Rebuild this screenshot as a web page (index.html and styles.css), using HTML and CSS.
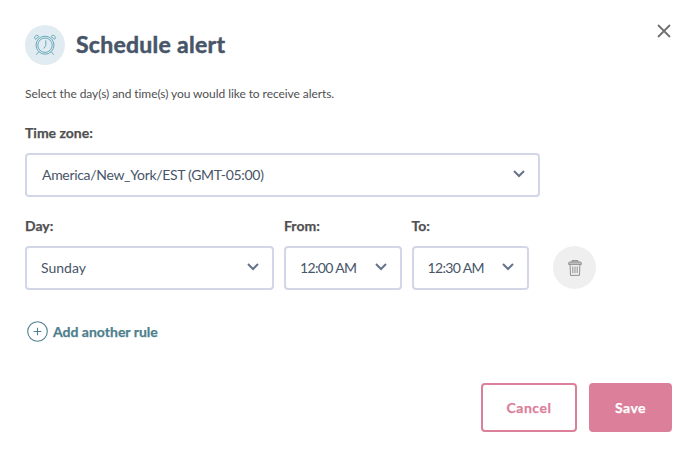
FILE: index.html
```
<!DOCTYPE html>
<html lang="en">
<head>
	<meta charset="utf-8">
	<meta name="viewport" content="width=device-width, initial-scale=1">
	<title>Schedule alert</title>
	<link rel="stylesheet" href="styles.css">
</head>
<body>
<div class="modal">
	<div class="header">
		<span class="clock">
			<svg width="22" height="22" viewBox="0 0 22 22">
				<circle cx="11" cy="11.2" r="9"/>
				<circle cx="11" cy="11.2" r="7.2"/>
				<path d="M11.8 6.4v5l-2 3.2M4.8 17.7l-2.5 3M17.2 17.7l2.5 3"/>
				<path d="M1.3 5.3C-.2 3.5 1.1 1.2 3 1.3c1 0 1.6.6 2 1.3zM20.7 5.3c1.5-1.8.2-4.1-1.7-4-1 0-1.6.6-2 1.3z"/>
			</svg>
		</span>
		<h1>Schedule alert</h1>
		<button class="close" type="button" aria-label="Close">
			<svg width="14" height="14" viewBox="0 0 14 14"><path d="M1 1l12 12M13 1L1 13"/></svg>
		</button>
	</div>
	<p class="intro">Select the day(s) and time(s) you would like to receive alerts.</p>

	<div class="field zone">
		<div class="label">Time zone:</div>
		<div class="select">
			<span>America/New_York/EST (GMT-05:00)</span>
			<svg class="arrow" width="12" height="8" viewBox="0 0 12 8"><path d="M1 1l5 5 5-5"/></svg>
		</div>
	</div>

	<div class="rule">
		<div class="field day">
			<div class="label">Day:</div>
			<div class="select">
				<span>Sunday</span>
				<svg class="arrow" width="12" height="8" viewBox="0 0 12 8"><path d="M1 1l5 5 5-5"/></svg>
			</div>
		</div>
		<div class="field time">
			<div class="label">From:</div>
			<div class="select">
				<span>12:00 AM</span>
				<svg class="arrow" width="12" height="8" viewBox="0 0 12 8"><path d="M1 1l5 5 5-5"/></svg>
			</div>
		</div>
		<div class="field time">
			<div class="label">To:</div>
			<div class="select">
				<span>12:30 AM</span>
				<svg class="arrow" width="12" height="8" viewBox="0 0 12 8"><path d="M1 1l5 5 5-5"/></svg>
			</div>
		</div>
		<button class="trash" type="button" aria-label="Delete rule">
			<svg width="14" height="16" viewBox="0 0 14 16">
				<path class="lid" d="M4 2V.6h6V2M.6 4.4V3.2Q.6 2 2 2h10q1.4 0 1.4 1.2v1.2z"/>
				<path d="M2.1 4.4l.4 11h9l.4-11M4.8 6.5v6.7M7 6.5v6.7M9.2 6.5v6.7"/>
			</svg>
		</button>
	</div>

	<button class="add" type="button">
		<svg width="21" height="21" viewBox="0 0 21 21"><circle cx="10.5" cy="10.5" r="9.8"/><path d="M10.5 6.7v7.6M6.7 10.5h7.6"/></svg>
		<span>Add another rule</span>
	</button>

	<div class="footer">
		<button class="btn cancel" type="button">Cancel</button>
		<button class="btn save" type="button">Save</button>
	</div>
</div>
</body>
</html>
```
FILE: styles.css
```
* {
	box-sizing: border-box;
}
body {
	margin: 0;
	background: #fff;
	color: #505050;
	font-family: Lato, "Liberation Sans", sans-serif;
}
button {
	padding: 0;
	border: 0;
	background: none;
	font-family: inherit;
}
svg {
	display: block;
	flex: none;
	fill: none;
}
.modal {
	width: 688px;
	height: 454px;
	padding: 25px 16px 22px 25px;
	display: flex;
	flex-direction: column;
	overflow: hidden;
}
.header {
	display: flex;
	align-items: center;
	height: 40px;
}
.clock {
	display: flex;
	align-items: center;
	justify-content: center;
	width: 40px;
	height: 40px;
	border-radius: 50%;
	background: #e0ecf2;
}
.clock svg {
	stroke: #6ba9b9;
	stroke-width: 1;
}
h1 {
	margin: 0 0 2px 11px;
	color: #475569;
	font-size: 23px;
	line-height: 30px;
	font-weight: 700;
	letter-spacing: .28px;
	-webkit-text-stroke: .5px;
}
.close {
	align-self: flex-start;
	margin: -1px 1px 0 auto;
}
.close svg {
	stroke: #707070;
	stroke-width: 1.8;
}
.intro {
	margin: 21px 0 0;
	font-size: 12px;
	line-height: 16px;
	letter-spacing: -.07px;
}
.label {
	margin-bottom: 11px;
	font-size: 14px;
	line-height: 18px;
	font-weight: 700;
	-webkit-text-stroke: .25px;
}
.zone {
	width: 514.5px;
	margin-top: 22px;
}
.select {
	display: flex;
	align-items: center;
	justify-content: space-between;
	height: 44px;
	padding: 0 13px 2px 14px;
	border: 2px solid #d1d7e6;
	border-radius: 4px;
	color: #475569;
	font-size: 14px;
	white-space: nowrap;
}
.zone .select {
	padding-left: 15px;
	letter-spacing: -.32px;
}
.time .select {
	letter-spacing: -.65px;
}
.arrow {
	stroke: #66738a;
	stroke-width: 2;
}
.rule {
	display: flex;
	align-items: flex-end;
	gap: 10px;
	margin-top: 20px;
}
.day {
	width: 249px;
}
.time {
	width: 117.5px;
}
.trash {
	display: flex;
	align-items: center;
	justify-content: center;
	width: 43px;
	height: 43px;
	margin: 0 0 1px 14px;
	border-radius: 50%;
	background: #efefef;
}
.trash svg {
	stroke: #929292;
	stroke-width: 1;
}
.trash .lid {
	fill: #c4c4c4;
}
.add {
	display: flex;
	align-items: center;
	align-self: flex-start;
	gap: 5px;
	margin: 31px 0 0 2px;
	color: #4d808d;
	font-size: 14px;
	line-height: 21px;
	font-weight: 700;
}
.add span {
	-webkit-text-stroke: .25px;
}
.add svg {
	stroke: #4d808d;
	stroke-width: 1.1;
}
.footer {
	display: flex;
	justify-content: flex-end;
	gap: 12px;
	margin-top: auto;
}
.btn {
	height: 49px;
	padding-bottom: 1px;
	border: 2px solid #dc7f9a;
	border-radius: 4px;
	font-size: 14px;
	font-weight: 700;
	letter-spacing: .5px;
	-webkit-text-stroke: .25px;
}
.cancel {
	width: 96px;
	color: #dc7f9a;
}
.save {
	width: 83px;
	background: #dc7f9a;
	color: #fff;
}
```
